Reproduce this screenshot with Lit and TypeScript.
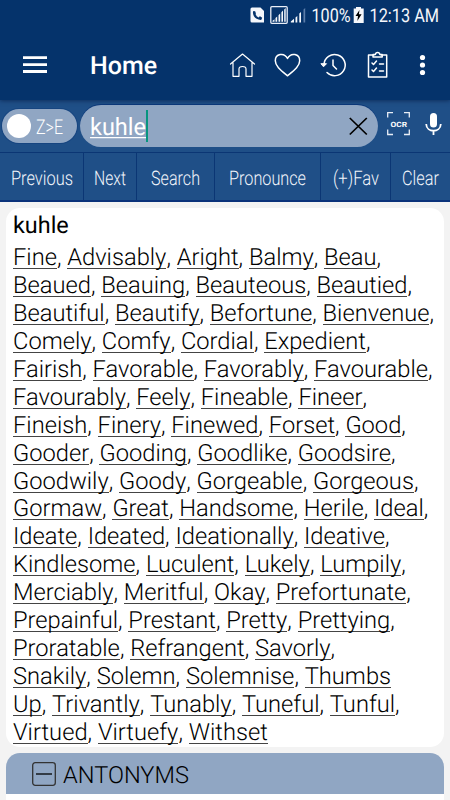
import { LitElement, html, css } from "lit";
import { customElement } from "lit/decorators.js";

const lines: string[][] = [
  ["Fine", "Advisably", "Aright", "Balmy", "Beau"],
  ["Beaued", "Beauing", "Beauteous", "Beautied"],
  ["Beautiful", "Beautify", "Befortune", "Bienvenue"],
  ["Comely", "Comfy", "Cordial", "Expedient"],
  ["Fairish", "Favorable", "Favorably", "Favourable"],
  ["Favourably", "Feely", "Fineable", "Fineer"],
  ["Fineish", "Finery", "Finewed", "Forset", "Good"],
  ["Gooder", "Gooding", "Goodlike", "Goodsire"],
  ["Goodwily", "Goody", "Gorgeable", "Gorgeous"],
  ["Gormaw", "Great", "Handsome", "Herile", "Ideal"],
  ["Ideate", "Ideated", "Ideationally", "Ideative"],
  ["Kindlesome", "Luculent", "Lukely", "Lumpily"],
  ["Merciably", "Meritful", "Okay", "Prefortunate"],
  ["Prepainful", "Prestant", "Pretty", "Prettying"],
  ["Proratable", "Refrangent", "Savorly"],
  ["Snakily", "Solemn", "Solemnise", "Thumbs"],
  ["Up", "Trivantly", "Tunably", "Tuneful", "Tunful"],
  ["Virtued", "Virtuefy", "Withset"],
];

const actions = [
  { label: "Previous", width: 84, text: 62 },
  { label: "Next", width: 53, text: 32 },
  { label: "Search", width: 78, text: 49 },
  { label: "Pronounce", width: 106, text: 77 },
  { label: "(+)Fav", width: 70, text: 46 },
  { label: "Clear", width: 59, text: 37 },
];

@customElement("app-root")
export class AppRoot extends LitElement {
  static styles = css`
    :host { display: block; width: 450px; height: 800px; overflow: hidden; background: #f3f3f3; font-family: Roboto, "Liberation Sans", sans-serif; color: #000; text-rendering: geometricPrecision; }
    * { box-sizing: border-box; }
    svg { display: block; flex: none; overflow: visible; }
    .header { height: 100px; background: #05336b; position: relative; box-shadow: 0 1px 4px rgba(0, 20, 60, .55); }
    .status { height: 30px; }
    .toolbar { height: 70px; display: flex; align-items: center; padding-left: 23px; color: #fff; }
    .title { font-size: 25px; font-weight: 500; margin-left: 43px; width: 138px; line-height: 30px; padding-top: 3px; }
    .search { height: 52px; background: #1f4f87; display: flex; align-items: center; padding-left: 2px; }
    .toggle { width: 75px; height: 34px; border-radius: 17px; background: #90a6c3; box-shadow: 0 0 0 1px #174580; display: flex; align-items: center; padding-left: 5px; gap: 5px; }
    .knob { width: 24px; height: 24px; border-radius: 50%; background: #fff; }
    .field { width: 298px; height: 42px; border-radius: 21px; background: #90a6c3; margin: 0 9px 0 3px; box-shadow: 0 -1px 0 #0c397a; display: flex; align-items: center; justify-content: space-between; padding: 0 11px 0 10px; }
    .entry { display: flex; align-items: center; }
    .caret { width: 2px; height: 32px; background: #07957f; }
    .ocr { margin-bottom: 4px; }
    .mic { margin: 0 0 4px 15px; }
    .actions { height: 50px; display: flex; background: #1f4f87; border-top: 1px solid #0b3674; border-bottom: 2px solid #0a327a; }
    .action { display: flex; align-items: center; justify-content: center; border-right: 1px solid #0b3674; flex: none; }
    .action:last-child { border-right: 0; }
    .w84 { width: 84px; } .w53 { width: 53px; } .w78 { width: 78px; } .w106 { width: 106px; } .w70 { width: 70px; } .w59 { width: 59px; }
    .card { margin: 6px 6px 0; height: 539px; border-radius: 14px; background: #fff; padding: 4px 7px 0; }
    .word { font-size: 23.4px; line-height: 26px; height: 32px; }
    .line { height: 27.94px; line-height: 27.94px; font-size: 23.7px; font-weight: 300; white-space: nowrap; }
    .link { border-bottom: 1px solid #444; display: inline-block; height: 25px; line-height: 27.94px; vertical-align: top; }
    .antonyms { margin: 6px 6px 0; height: 41px; border-radius: 14px 14px 0 0; background: #90a6c3; display: flex; align-items: center; padding: 2px 0 0 26px; font-size: 23.6px; font-weight: 300; gap: 7px; }
    .sign { margin-bottom: 2px; }
    .below { height: 6px; margin: 0 6px; background: #fff; }
  `;

  render() {
    return html`
      <div class="header">
        <div class="status">
          <svg width="450" height="30" fill="#f5f7fb">
            <path d="M252 7.500h8.500l3.500 3.500v11.500h-12q-1.500 0-1.500-1.500V9q0-1.500 1.500-1.500z"/>
            <path fill="none" stroke="#05336b" stroke-width="2.200" d="M254 12q.3 6.500 7 7"/>
            <path fill="#05336b" d="M253 11l2.200.2.600 2.600-1.800 1.200zM258.500 17.200l1.500-1 2.200 1.500-1 2.300z"/>
            <rect x="270.800" y="6.700" width="16.400" height="16.600" rx="1" fill="none" stroke="#e9eef8" stroke-width="1.300"/>
            <path d="M272.500 21.800v-1l2-1.500v2.500zM275.500 21.800V18l1.700-1.500v5.300zM278.500 21.800v-6.500l1.700-1.700v8.200zM281.400 21.800v-9.500l1.600-1.700v11.200zM284.200 21.800V9.500l1.500-1.500v13.800zM290.800 22.500v-1l3.200-2.700v3.700zM295.500 22.500v-5l1.800-1.500v6.500zM299.300 22.500V13.500l1.700-1.500v10.500z"/>
            <path fill="#5c7da9" d="M303.500 22.500V9.500l1.700-1.500v14.500z"/>
            <text x="311.500" y="22.300" font-size="19" textLength="39" lengthAdjust="spacingAndGlyphs">100%</text>
            <path d="M356 7h5v1.500h2.700V23h-10V8.500h2.300z"/><path fill="#000" d="M359.500 10l-4 6h2.500l-.7 5 4.300-6.800h-2.700z"/>
            <text x="369.500" y="22.300" font-size="19" textLength="69.500" lengthAdjust="spacingAndGlyphs">12:13 AM</text>
          </svg>
        </div>
        <div class="toolbar">
          <svg width="24" height="18" fill="#fff"><path d="M0 .3h24v2.800H0zM0 7.300h24v2.800H0zM0 14.100h24v2.800H0z"/></svg>
          <div class="title">Home</div>
          <svg width="220" height="30" fill="none" stroke="#fff" stroke-width="1.500" stroke-linejoin="round" stroke-linecap="round">
            <g transform="translate(-228 -50)">
              <path stroke-width="1.200" d="M230.500 64L242.500 54l12 10M233 62.500V76.300h6V69q0-2.500 3.500-2.500T246 69v7.300h6V62.500"/>
              <path d="M287.500 75.800C280.500 70 275.300 66 275.300 60.700 275.300 54 284 51.800 287.500 58.500 291 51.800 299.700 54 299.700 60.700 299.700 66 294.500 70 287.500 75.800z"/>
              <path d="M324 64.500A10.600 10.600 0 1 1 327 72.500M333 60V65.500l3.500 3.500"/>
              <path fill="#fff" stroke-width="1" d="M321.300 63.700h5.200l-2.700 2.800z"/>
              <path d="M374 55h-5.500V77h18.200V55H381M373 57h9.200v-2.500h-2.400q-.2-2-2.200-2t-2.200 2H373zM372 63l1.500 1.500 3-3.500M372 70l1.500 1.500 3-3.500M379.500 64h4M379.500 71h4"/>
              <g fill="#fff" stroke="none"><circle cx="422.500" cy="57.500" r="2.600"/><circle cx="422.500" cy="65" r="2.600"/><circle cx="422.500" cy="72.500" r="2.600"/></g>
            </g>
          </svg>
        </div>
      </div>
      <div class="search">
        <div class="toggle">
          <div class="knob"></div>
          <svg width="28" height="24" fill="#fff"><text x="0" y="19.500" font-size="20.500" font-weight="300" textLength="27" lengthAdjust="spacingAndGlyphs">Z&gt;E</text></svg>
        </div>
        <div class="field">
          <div class="entry">
            <svg width="56" height="32" fill="#fff"><text x="0" y="25" font-size="24" textLength="56" lengthAdjust="spacingAndGlyphs">kuhle</text><path d="M0 27h56v1.300H0z"/></svg>
            <div class="caret"></div>
          </div>
          <svg width="18" height="18" stroke="#000" stroke-width="1.700"><path d="M.8 1l17 16.500M17.800 1L.8 17.500"/></svg>
        </div>
        <svg class="ocr" width="23" height="24" fill="none" stroke="#e8eef6" stroke-width="1.300"><path d="M.7 5.500V.7H6M17 .7h5.300v4.800M22.300 17.500v5H17M6 22.500H.7v-5"/><text x="3.500" y="14.500" fill="#fff" stroke="none" font-size="7.200" font-weight="700" textLength="16.500" lengthAdjust="spacingAndGlyphs">OCR</text></svg>
        <svg class="mic" width="17" height="23" fill="#fff"><rect x="5" y="0" width="7" height="14.500" rx="3.500"/><path d="M1.200 11C1.500 20 15.500 20 15.800 11M8.500 17v5" fill="none" stroke="#fff" stroke-width="1.800"/></svg>
      </div>
      <div class="actions">
        ${actions.map(a => html`<div class="action w${a.width}"><svg width=${a.text} height="24" fill="#f1f5fb"><text x="0" y="19.500" font-size="20" font-weight="300" textLength=${a.text} lengthAdjust="spacingAndGlyphs">${a.label}</text></svg></div>`)}
      </div>
      <div class="card">
        <div class="word">kuhle</div>
        ${lines.map((words, i) => html`<div class="line">${words.map((w, j) => html`<span class="link">${w}</span>${(i === 15 && j === 3) || (i === 17 && j === 2) ? "" : ", "}`)}</div>`)}
      </div>
      <div class="antonyms">
        <svg class="sign" width="24" height="24" fill="none" stroke="#333" stroke-width="1.300"><rect x=".7" y=".7" width="22.600" height="22.600" rx="2.500"/><path stroke="#000" d="M4 12h16"/></svg>
        <span>ANTONYMS</span>
      </div>
      <div class="below"></div>
    `;
  }
}
